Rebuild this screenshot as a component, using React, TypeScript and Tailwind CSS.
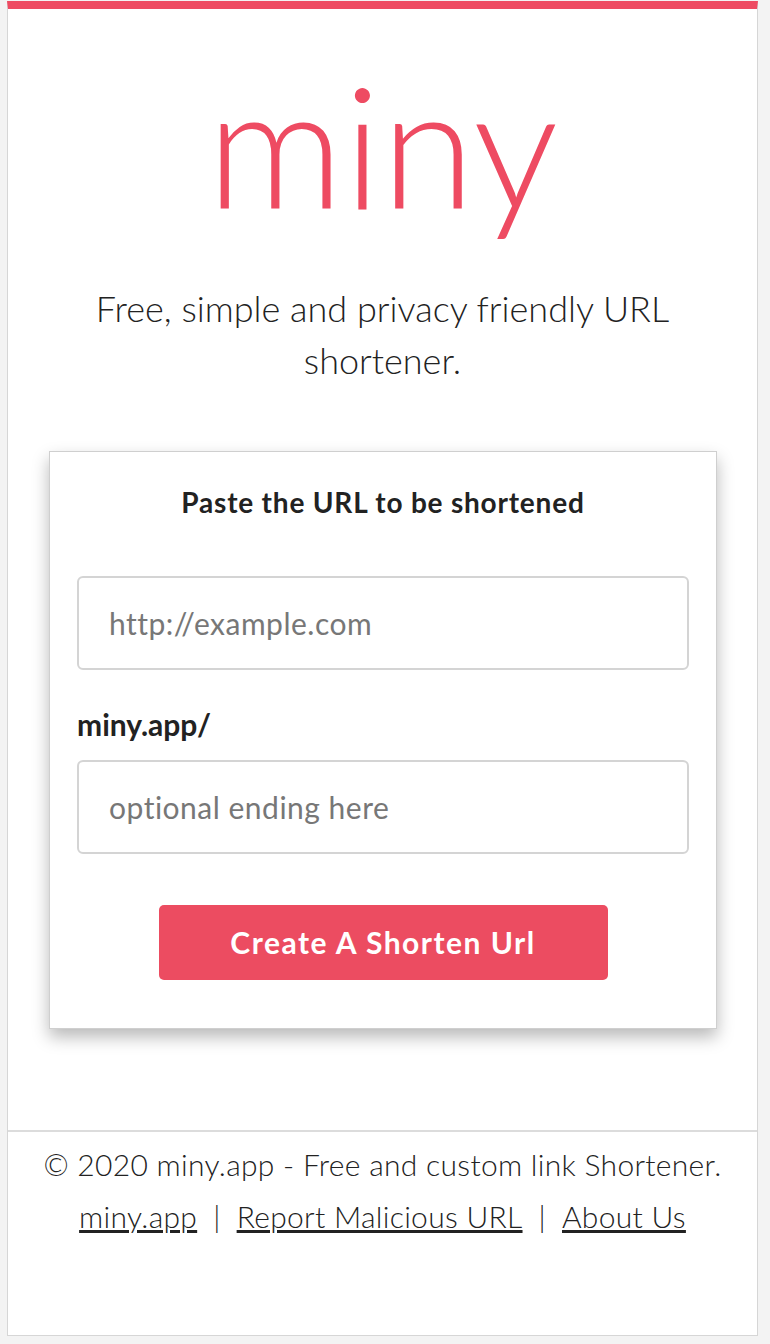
export default function App() {
  return (
    <div className="min-h-[1344px] bg-[#f3f3f3] pt-px" style={{ fontFamily: 'Lato, "Open Sans", sans-serif' }}>
      <div className="ml-[7px] mr-[12px] flex h-[1335px] flex-col border-x border-b border-[#d6d6d6] border-t-[8px] border-t-[#ee4b62] bg-white">
        {/* Hero */}
        <h1 className="mt-[34px] text-center text-[170px] font-light leading-[200px] text-[#ee4b62]">miny</h1>
        <p className="mx-auto mt-[39px] max-w-[640px] text-center text-[36px] font-light leading-[52px] text-[#222]">
          Free, simple and privacy friendly URL shortener.
        </p>

        {/* Form card */}
        <div className="ml-[41px] mr-[40px] mt-[65px] border border-[#cfcfcf] bg-white px-[27px] pb-[48px] pt-[30px] shadow-[0_8px_16px_rgba(0,0,0,0.28)]">
          <h2 className="text-center text-[28px] font-bold leading-[40px] tracking-[0.8px] text-[#222]">Paste the URL to be shortened</h2>
          <input
            className="mt-[54px] block h-[94px] w-full rounded-[6px] border-2 border-[#d4d4d4] px-[30px] text-[30px] tracking-[0.5px] text-[#333] placeholder:text-[#777] outline-none"
            placeholder="http://example.com"
          />
          <label className="mt-[38px] block text-[30px] font-bold leading-[32px] text-[#222]">miny.app/</label>
          <input
            className="mt-[20px] block h-[94px] w-full rounded-[6px] border-2 border-[#d4d4d4] px-[30px] text-[30px] tracking-[0.5px] text-[#333] placeholder:text-[#777] outline-none"
            placeholder="optional ending here"
          />
          <div className="mt-[51px] flex justify-center">
            <button className="h-[75px] w-[449px] rounded-[5px] bg-[#ec4c61] text-[30px] font-bold tracking-[1.5px] text-white">
              Create A Shorten Url
            </button>
          </div>
        </div>

        {/* Footer */}
        <footer className="mt-[101px] border-t-2 border-[#dcdcdc] pt-[6px] text-center text-[30px] font-light leading-[52px] tracking-[0.3px] text-[#222]">
          <p>© 2020 miny.app - Free and custom link Shortener.</p>
          <p>
            <a href="#" className="underline">miny.app</a>
            <span className="mx-[16px]">|</span>
            <a href="#" className="underline">Report Malicious URL</a>
            <span className="mx-[16px]">|</span>
            <a href="#" className="underline">About Us</a>
          </p>
        </footer>
      </div>
    </div>
  )
}
